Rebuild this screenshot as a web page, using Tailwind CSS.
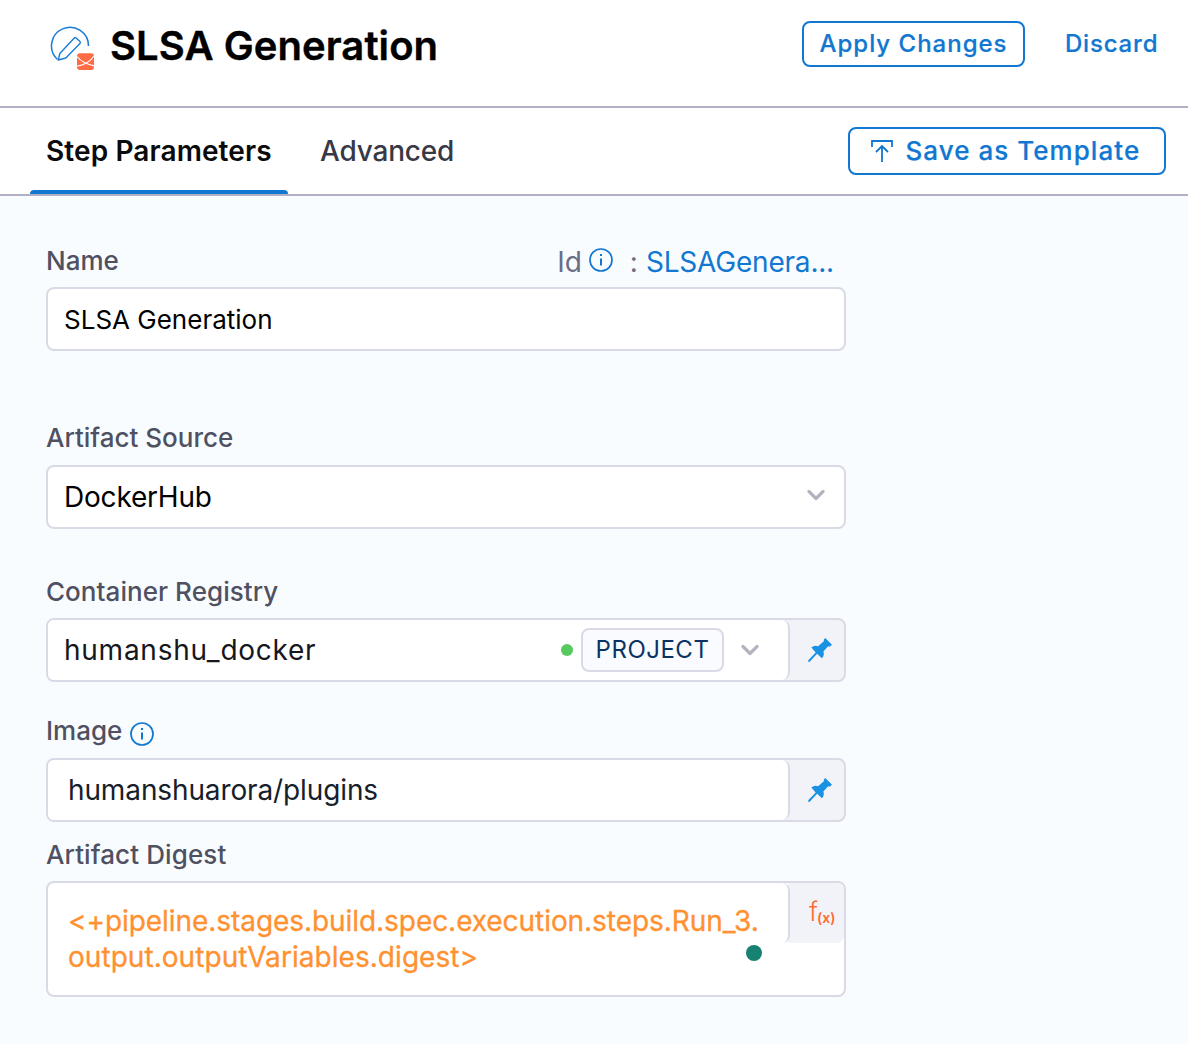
<!DOCTYPE html>
<html lang="en">
<head>
<meta charset="utf-8">
<title>SLSA Generation</title>
<script src="https://cdn.jsdelivr.net/npm/@tailwindcss/browser@4"></script>
</head>
<body class="h-[1044px] overflow-hidden bg-[#f9fcff] font-['Inter',sans-serif] text-black">
<header class="flex h-[108px] justify-between border-b-2 border-[#b0b1c4] bg-white pt-[21px] pr-[30px] pl-[50px]">
  <div class="flex">
    <svg class="mt-[3px] mr-[14px] h-[46px] w-[46px]" viewBox="0 0 46 46" fill="none">
      <path d="M7.500 35.500A18.500 18.500 0 1 1 38.500 22" stroke="#1a7bd4" stroke-width="1.500"/>
      <path d="M8.300 36l1.500-6.500L24.300 13.900q.9-.8 1.800 0L30 17.600q.8.9 0 1.800L15.800 34z" stroke="#1a7bd4" stroke-width="1.400" stroke-linejoin="round"/>
      <rect x="27" y="29.300" width="17" height="16.700" rx="3" fill="#ff6b45"/>
      <path d="M27 32.500q3 4 8 6.300q4 2 9 3M27 42q5-.5 9.500-3t7.500-7" stroke="#fff" stroke-width="1.200"/>
    </svg>
    <h1 class="pt-px text-[40px] leading-[48px] font-semibold tracking-[0.07px] [-webkit-text-stroke:0.4px_#000]">SLSA Generation</h1>
  </div>
  <div class="flex text-[24px] leading-[42px] font-medium text-[#1177d1] [-webkit-text-stroke:0.2px_#1177d1]">
    <button class="mr-10 h-[46px] w-[223px] rounded-lg border-2 border-[#1177d1] tracking-[1px]">Apply Changes</button>
    <button class="h-[46px] w-[93px] text-left tracking-[0.8px]">Discard</button>
  </div>
</header>
<nav class="flex h-[88px] justify-between border-b-2 border-[#b0b1c4] bg-white pr-[22px] pl-[30px] text-[28px] leading-[86px]">
  <div class="flex">
    <div class="flex w-[258px] flex-col justify-between px-4 font-semibold tracking-[0.1px] text-[#0b0b0d]"><span class="h-[82px] whitespace-nowrap">Step Parameters</span><i class="-mx-4 h-1 rounded-t bg-[#1177d1]"></i></div>
    <div class="ml-8 font-medium tracking-[-0.2px] text-[#383946]">Advanced</div>
  </div>
  <button class="mt-[19px] flex h-12 w-[318px] items-center rounded-lg border-2 border-[#1177d1] pl-[21px] text-[26px] leading-[44px] font-medium tracking-[1.04px] whitespace-nowrap text-[#1177d1] [-webkit-text-stroke:0.2px_#1177d1]">
    <svg class="mr-[12.5px] h-[24px] w-[22px] shrink-0" viewBox="0 0 22 24" fill="none" stroke="#1177d1" stroke-width="1.800"><path d="M1 8V2H21V8M11 23V7M5 13l6-6 6 6"/></svg>
    Save as Template
  </button>
</nav>
<main class="flex w-[846px] flex-col pl-[46px]">
  <div class="mt-[44px] flex h-[47px] justify-between text-[26px] leading-[42px] font-medium text-[#4f5162]">
    <span>Name</span>
    <div class="flex pr-3 text-[28px] leading-[44px] font-normal text-[#6b6d85]"><span>Id</span>
      <svg class="mt-2 mr-px ml-[7px] h-[24px] w-[24px]" viewBox="0 0 24 24" fill="none" stroke="#1177d1" stroke-width="1.700"><circle cx="12" cy="12" r="11"/><path d="M12 10.500v7M12 6v2" stroke-width="2"/></svg>
      <b class="mr-2 ml-4 font-normal">:</b><span class="tracking-[-0.2px] text-[#1177d1]">SLSAGenera...</span></div>
  </div>
  <div class="h-16 rounded-lg border-2 border-[#d9dae5] bg-white px-4 text-[26px] leading-[62px]">SLSA Generation</div>
  <div class="mt-[66px] h-[48px] text-[26px] leading-[42px] font-medium text-[#4f5162]">Artifact Source</div>
  <div class="flex h-16 items-center justify-between rounded-lg border-2 border-[#d9dae5] bg-white pr-[19px] pl-4 text-[28px] tracking-[-0.2px]">DockerHub
    <svg class="mb-[4px] h-[12px] w-[18px]" viewBox="0 0 18 12" fill="none" stroke="#b5b3c0" stroke-width="3.200" stroke-linecap="round" stroke-linejoin="round"><path d="M2 2.500l7 7 7-7"/></svg></div>
  <div class="mt-[42px] h-[47px] text-[26px] leading-[42px] font-medium tracking-[0.05px] text-[#4f5162]">Container Registry</div>
  <div class="flex h-16 overflow-hidden rounded-lg border-2 border-[#d9dae5] bg-[#f2f2f9]">
    <div class="flex w-[742px] items-center rounded-r-lg border-r-2 border-[#d9dae5] bg-white pl-4 text-[28px] text-[#16171c]"><span class="tracking-[0.75px]">humanshu_docker</span>
      <i class="ml-auto size-3 rounded-full bg-[#56ca5c]"></i>
      <div class="ml-2 h-11 w-[143px] rounded-lg border-2 border-[#d9dae5] bg-[#fafbfe] text-center text-[24px] leading-[40px] tracking-[0.5px] text-[#0a3364]">PROJECT</div>
      <svg class="mr-[29px] ml-[17px] h-[12px] w-[18px]" viewBox="0 0 18 12" fill="none" stroke="#b5b3c0" stroke-width="3.200" stroke-linecap="round" stroke-linejoin="round"><path d="M2 2.500l7 7 7-7"/></svg>
    </div>
    <svg class="mt-[18px] ml-[18px] h-[24px] w-[24px]" viewBox="0 0 25 25" fill="#1a92e3"><path d="M16.500 1.500L18 0l7 7-2.500 2-1.500-.5-5 5.500q1.500 4-1.500 7l-5-4.500L1.500 25 0 24.500l.5-1.500 7.500-8-4.500-5q3-3 7-1.500l6-5z"/></svg>
  </div>
  <div class="mt-[28px] flex h-[48px] text-[26px] leading-[42px] font-medium text-[#4f5162]"><span>Image</span>
    <svg class="mt-3 ml-2 h-[24px] w-[24px]" viewBox="0 0 24 24" fill="none" stroke="#1177d1" stroke-width="1.700"><circle cx="12" cy="12" r="11"/><path d="M12 10.500v7M12 6v2" stroke-width="2"/></svg></div>
  <div class="flex h-16 overflow-hidden rounded-lg border-2 border-[#d9dae5] bg-[#f2f2f9]">
    <div class="flex w-[742px] items-center rounded-r-lg border-r-2 border-[#d9dae5] bg-white pl-5 text-[28px] tracking-[-0.12px] text-[#16202a]">humanshuarora/plugins</div>
    <svg class="mt-[18px] ml-[18px] h-[24px] w-[24px]" viewBox="0 0 25 25" fill="#1a92e3"><path d="M16.500 1.500L18 0l7 7-2.500 2-1.500-.5-5 5.500q1.500 4-1.500 7l-5-4.500L1.500 25 0 24.500l.5-1.500 7.500-8-4.500-5q3-3 7-1.500l6-5z"/></svg>
  </div>
  <div class="mt-[12px] h-[47px] text-[26px] leading-[42px] font-medium tracking-[0.1px] text-[#4f5162]">Artifact Digest</div>
  <div class="relative flex h-[116px] rounded-lg border-2 border-[#d9dae5] bg-white">
    <div class="w-[740px] pt-5 pl-5 text-[28px] leading-[36px] whitespace-nowrap text-[#ff9130] [-webkit-text-stroke:0.3px_#ff9130]"><span class="tracking-[-0.06px]">&lt;+pipeline.stages.build.spec.execution.steps.Run_3.</span><br><span class="tracking-[0.05px]">output.outputVariables.digest&gt;</span></div>
    <i class="absolute top-[62px] left-[698px] size-4 rounded-full bg-[#178272]"></i>
    <div class="flex h-[60px] flex-1 rounded-r-lg bg-[#f2f2f9] text-[#ff6b30]">
      <div class="-ml-1.5 h-[60px] w-2 rounded-r-lg border-r-2 border-[#d9dae5] bg-white"></div>
      <span class="ml-[19px] pt-[11px] text-[26px] leading-[36px] font-light">f</span><span class="-ml-px pt-[24px] text-[14px] leading-[22px] font-semibold">(x)</span>
    </div>
  </div>
</main>
</body>
</html>
